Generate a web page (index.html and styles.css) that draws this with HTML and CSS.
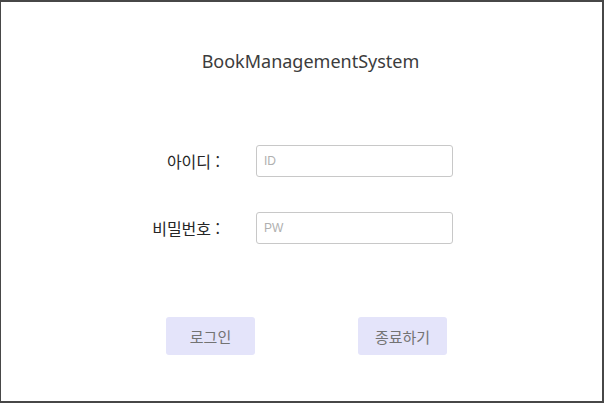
FILE: index.html
```html
<!DOCTYPE html>
<html lang="ko">
<head>
<meta charset="utf-8">
<link rel="stylesheet" href="styles.css">
</head>
<body>
<div class="window">
  <h1 class="title">BookManagementSystem</h1>
  <div class="form">
    <div class="row">
      <label class="label">아이디 :</label>
      <input class="field" type="text" placeholder="ID">
    </div>
    <div class="row">
      <label class="label">비밀번호 :</label>
      <input class="field" type="password" placeholder="PW">
    </div>
  </div>
  <div class="actions">
    <button class="btn">로그인</button>
    <button class="btn">종료하기</button>
  </div>
</div>
</body>
</html>
```

FILE: styles.css
```css
html, body {
  margin: 0;
  padding: 0;
  background: #ffffff;
}
.window {
  box-sizing: border-box;
  width: 604px;
  height: 403px;
  border-style: solid;
  border-color: #474747;
  border-width: 2px 2px 2px 1px;
  background: #ffffff;
  display: flex;
  flex-direction: column;
  align-items: center;
  font-family: "Noto Sans", "Noto Sans CJK KR", sans-serif;
}
.title {
  margin: 47px 0 0 18px;
  font-size: 18px;
  font-weight: normal;
  color: #3c3c3c;
  line-height: 24px;
  letter-spacing: 0;
}
.form {
  margin-top: 72px;
  margin-right: 10px;
  display: flex;
  flex-direction: column;
  gap: 35px;
}
.row {
  display: flex;
  align-items: center;
}
.label {
  width: 80px;
  text-align: right;
  margin-right: 36px;
  font-size: 16px;
  color: #262626;
  font-family: "Noto Sans CJK KR", sans-serif;
}
.field {
  box-sizing: border-box;
  width: 197px;
  height: 32px;
  border: 1px solid #c8c8c8;
  border-radius: 3px;
  padding: 0 7px;
  font-family: "Liberation Sans", sans-serif;
  font-size: 12px;
  color: #333;
  outline: none;
}
.field::placeholder {
  color: #b0b0b0;
}
.actions {
  margin-top: 73px;
  display: flex;
  gap: 103px;
  margin-left: 10px;
}
.btn {
  width: 89px;
  height: 38px;
  border: none;
  border-radius: 3px;
  background: #e4e4fa;
  color: #737373;
  font-size: 15px;
  font-family: "Noto Sans CJK KR", sans-serif;
  padding: 0;
}
```
